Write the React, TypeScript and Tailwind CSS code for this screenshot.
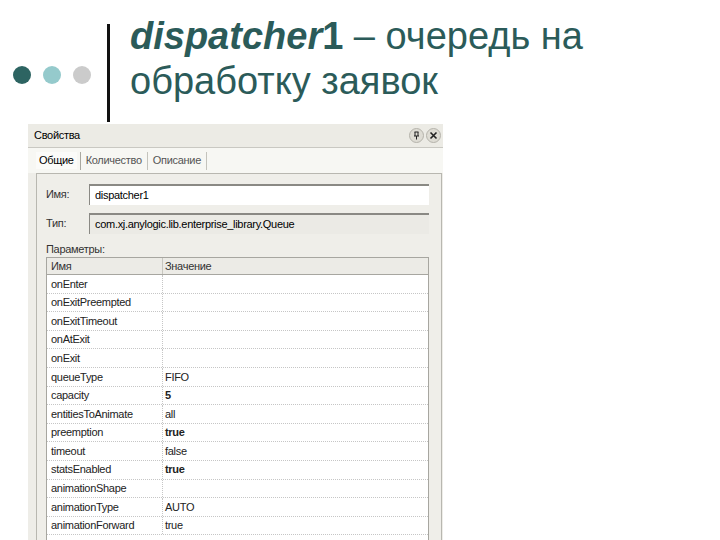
import React from "react";

const rows: [string, string, boolean][] = [
  ["onEnter", "", false],
  ["onExitPreempted", "", false],
  ["onExitTimeout", "", false],
  ["onAtExit", "", false],
  ["onExit", "", false],
  ["queueType", "FIFO", false],
  ["capacity", "5", true],
  ["entitiesToAnimate", "all", false],
  ["preemption", "true", true],
  ["timeout", "false", false],
  ["statsEnabled", "true", true],
  ["animationShape", "", false],
  ["animationType", "AUTO", false],
  ["animationForward", "true", false],
];

export default function App() {
  return (
    <div className="w-[720px] h-[540px] bg-white overflow-hidden flex flex-col" style={{ fontFamily: '"Liberation Sans", Arial, sans-serif' }}>
      {/* header */}
      <div className="h-[124px] flex shrink-0">
        <div className="pl-[13px] pt-[66px] flex gap-[12px] items-start">
          <div className="w-[18px] h-[18px] rounded-full bg-[#2d6462]" />
          <div className="w-[18px] h-[18px] rounded-full bg-[#95cacc]" />
          <div className="w-[18px] h-[18px] rounded-full bg-[#cbcbcb]" />
        </div>
        <div className="ml-[16px] mt-[24px] w-[3px] h-[98px] bg-[#111]" />
        <div className="ml-[20px] pt-[14px] text-[38px] leading-[45px] text-[#2b5b59]">
          <div>
            <span className="font-bold italic">dispatcher</span>
            <span className="font-bold">1</span>
            <span> – очередь на</span>
          </div>
          <div>обработку заявок</div>
        </div>
      </div>

      {/* panel */}
      <div className="ml-[28px] w-[415px] flex-1 bg-[#eeede8] flex flex-col text-[11px] tracking-[-0.3px] text-black" style={{ fontFamily: '"Liberation Sans", Tahoma, sans-serif' }}>
        <div className="h-[24px] shrink-0 flex items-center justify-between pl-[6px] pr-[2px] bg-[#ecebe5] border-b border-[#c9c8c2]">
          <span>Свойства</span>
          <div className="flex gap-[2px]">
            <div className="w-[15px] h-[15px] rounded-full bg-[#dedcd4] border border-[#b5b3ab] flex items-center justify-center">
              <svg width="9" height="9" viewBox="0 0 9 9">
                <path d="M2.5 1h4M3 1v4M6 1v4M2 5h5M4.5 5v3.5" stroke="#222" strokeWidth="1" fill="none" />
              </svg>
            </div>
            <div className="w-[15px] h-[15px] rounded-full bg-[#dedcd4] border border-[#b5b3ab] flex items-center justify-center">
              <svg width="9" height="9" viewBox="0 0 9 9">
                <path d="M1.5 1.5l6 6M7.5 1.5l-6 6" stroke="#222" strokeWidth="1.6" fill="none" />
              </svg>
            </div>
          </div>
        </div>
        <div className="h-[25px] shrink-0 bg-[#f7f7f3] flex items-center pl-[8px]">
          <div className="flex items-center h-[20px]">
            <span className="px-[3px] bg-[#fbfbf9]">Общие</span>
            <span className="w-px h-[18px] bg-[#a9a8a0] mx-[3px]" />
            <span className="px-[2px] text-[#555]">Количество</span>
            <span className="w-px h-[18px] bg-[#c4c3bc] mx-[3px]" />
            <span className="px-[2px] text-[#555]">Описание</span>
            <span className="w-px h-[18px] bg-[#c4c3bc] mx-[3px]" />
          </div>
        </div>
        <div className="ml-[8px] mr-[1px] flex-1 bg-[#efeee9] border-t border-l border-r border-[#b8b7b0] flex flex-col">
          <div className="mt-[10px] flex items-center h-[21px]">
            <span className="w-[52px] pl-[9px] text-[#333]">Имя:</span>
            <div className="w-[340px] h-[21px] bg-white border-t-2 border-l border-[#8a8984] flex items-center pl-[5px]">dispatcher1</div>
          </div>
          <div className="mt-[8px] flex items-center h-[21px]">
            <span className="w-[52px] pl-[9px] text-[#333]">Тип:</span>
            <div className="w-[340px] h-[21px] bg-[#ebeae5] border-t-2 border-l border-[#8a8984] flex items-center pl-[5px]">com.xj.anylogic.lib.enterprise_library.Queue</div>
          </div>
          <div className="mt-[7px] pl-[9px] h-[16px] leading-[16px] text-[#333]">Параметры:</div>
          <div className="ml-[9px] w-[383px] flex-1 bg-white border-t border-l border-r border-[#a7a6a0] flex flex-col">
            <div className="h-[17px] shrink-0 flex bg-[#ecebe6] border-b border-[#a7a6a0] text-[#333]">
              <div className="w-[116px] pl-[4px] border-r border-[#c8c7c0] flex items-center">Имя</div>
              <div className="flex-1 pl-[2px] flex items-center">Значение</div>
            </div>
            {rows.map(([k, v, b]) => (
              <div key={k} className="h-[18.6px] shrink-0 flex border-b border-dotted border-[#c6c6c6]">
                <div className="w-[116px] pl-[4px] border-r border-dotted border-[#c6c6c6] flex items-center text-[#222]">{k}</div>
                <div className={"flex-1 pl-[2px] flex items-center text-[#222] " + (b ? "font-bold" : "")}>{v}</div>
              </div>
            ))}
          </div>
        </div>
      </div>
    </div>
  );
}
